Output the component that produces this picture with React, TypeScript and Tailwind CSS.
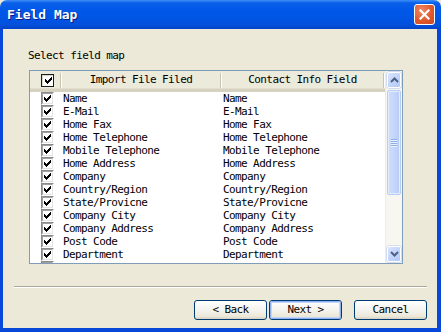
import React from "react";

const FONT = "[font-family:'DejaVu_Sans_Mono',monospace]";

const CHECK_PIXELS: [number, number][] = [
  [6, 0],
  [5, 1], [6, 1],
  [0, 2], [4, 2], [5, 2], [6, 2],
  [0, 3], [1, 3], [3, 3], [4, 3], [5, 3],
  [0, 4], [1, 4], [2, 4], [3, 4], [4, 4],
  [1, 5], [2, 5], [3, 5],
  [2, 6],
];

function CheckMark() {
  return (
    <svg width="7" height="7" viewBox="0 0 7 7" shapeRendering="crispEdges">
      {CHECK_PIXELS.map(([x, y], i) => (
        <rect key={i} x={x} y={y} width="1" height="1" fill="#000" />
      ))}
    </svg>
  );
}

function RowCheck() {
  return (
    <div className="w-[13px] h-[13px] border-t border-l border-t-[#8a8a8a] border-l-[#8a8a8a] border-r border-b border-r-white border-b-white flex">
      <div className="flex-1 border-t border-l border-t-[#a0a0a0] border-l-[#a0a0a0] border-r border-b border-r-[#e4e4e4] border-b-[#e4e4e4] bg-white flex items-center justify-center">
        <CheckMark />
      </div>
    </div>
  );
}

function HeaderCheck() {
  return (
    <div className="w-[13px] h-[13px] border border-[#1c1c1c] bg-white flex">
      <div className="flex-1 border-t border-l border-[#d8d8d0] flex items-center justify-center">
        <CheckMark />
      </div>
    </div>
  );
}

function Sep() {
  return (
    <div className="w-[2px] h-[15px] flex shrink-0">
      <div className="w-[1px] bg-[#c7c5b2]" />
      <div className="w-[1px] bg-white" />
    </div>
  );
}

function Chevron({ down }: { down?: boolean }) {
  return (
    <svg width="9" height="6" viewBox="0 0 9 6">
      <polyline
        points={down ? "1,1 4.5,4.5 8,1" : "1,5 4.5,1.5 8,5"}
        fill="none"
        stroke="#4d6185"
        strokeWidth="2"
      />
    </svg>
  );
}

function ScrollBtn({ down }: { down?: boolean }) {
  return (
    <div className="h-[16px] rounded-[2px] border border-white bg-[linear-gradient(135deg,#dbe6fd_0%,#c3d5fb_50%,#b4c8f6_100%)] shadow-[0_0_0_0.5px_#b0c4ee] flex items-center justify-center">
      <Chevron down={down} />
    </div>
  );
}

const rows = [
  "Name",
  "E-Mail",
  "Home Fax",
  "Home Telephone",
  "Mobile Telephone",
  "Home Address",
  "Company",
  "Country/Region",
  "State/Provicne",
  "Company City",
  "Company Address",
  "Post Code",
  "Department",
];

function Button({ label, def }: { label: string; def?: boolean }) {
  return (
    <div className="w-[73px] h-[20px] rounded-[3px] border border-[#003c74] bg-[linear-gradient(180deg,#ffffff_0%,#f4f3ee_50%,#ece9d8_85%,#d6d0c5_100%)] flex">
      <div
        className={
          "flex-1 rounded-[2px] flex items-center justify-center text-black text-[11px] tracking-[-0.6px] " +
          FONT +
          (def ? " border border-[#8fb0f0] shadow-[inset_0_0_0_1px_#c4d6f7]" : "")
        }
      >
        {label}
      </div>
    </div>
  );
}

export default function App() {
  return (
    <div className="w-[441px] h-[332px] flex flex-col bg-[#ece9d8]">
      {/* Title bar */}
      <div className="h-[29px] shrink-0 rounded-t-[7px] bg-[linear-gradient(180deg,#3d8ff6_0%,#0a60ea_10%,#0058e8_35%,#0055e5_60%,#0450dc_85%,#0343c8_100%)] flex items-center pl-[7px] pr-[6px]">
        <div
          className={
            "text-white font-bold text-[13px] leading-none tracking-[0px] [text-shadow:1px_1px_0_#0a1a80] " +
            FONT
          }
        >
          Field Map
        </div>
        <div className="flex-1" />
        <div className="w-[21px] h-[21px] rounded-[3px] border border-white bg-[radial-gradient(circle_at_35%_30%,#f08a68_0%,#e2582c_55%,#c84a20_100%)] flex items-center justify-center">
          <svg width="11" height="11" viewBox="0 0 11 11">
            <path d="M1.5 1.5 L9.5 9.5 M9.5 1.5 L1.5 9.5" stroke="#fff" strokeWidth="2.2" strokeLinecap="square" />
          </svg>
        </div>
      </div>

      {/* Body */}
      <div className="flex-1 flex flex-col border-l-[3px] border-r-[4px] border-b-[4px] border-[#0848d8]">
        <div className={"ml-[25px] mt-[20px] h-[13px] leading-[13px] text-[11px] tracking-[-0.6px] text-black " + FONT}>
          Select field map
        </div>

        {/* List box */}
        <div className="ml-[26px] mt-[8px] w-[374px] h-[194px] border border-[#7f9db9] bg-white flex overflow-hidden">
          <div className="w-[355px] flex flex-col overflow-hidden">
            {/* Header */}
            <div className="h-[21px] shrink-0 flex items-center bg-[#ebeadb] border-b-[3px] border-b-[#d6d2c2] shadow-[inset_0_-1px_0_#e2decd]">
              <div className="w-[32px] h-full flex items-center">
                <div className="ml-[11px] flex-1">
                  <HeaderCheck />
                </div>
                <Sep />
              </div>
              <div className={"w-[160px] flex items-center " + FONT}>
                <div className="flex-1 text-center text-[11px] tracking-[-0.6px] text-black">Import File Filed</div>
                <Sep />
              </div>
              <div className={"flex-1 flex items-center " + FONT}>
                <div className="flex-1 text-center text-[11px] tracking-[-0.6px] text-black">Contact Info Field</div>
                <Sep />
              </div>
            </div>
            {/* Rows */}
            {rows.map((r) => (
              <div key={r} className={"h-[13px] shrink-0 flex items-center text-[11px] tracking-[-0.6px] text-black " + FONT}>
                <div className="w-[32px] pl-[11px]">
                  <RowCheck />
                </div>
                <div className="w-[160px] pl-[1px] leading-[13px] whitespace-nowrap">{r}</div>
                <div className="flex-1 pl-[1px] leading-[13px] whitespace-nowrap">{r}</div>
              </div>
            ))}
            {/* partially visible next row */}
            <div className="h-[13px] shrink-0 flex items-center">
              <div className="w-[32px] pl-[11px]">
                <RowCheck />
              </div>
            </div>
          </div>

          {/* Scrollbar */}
          <div className="w-[17px] flex flex-col p-[1px] bg-[#f7f6f0] border-l border-[#eeede5]">
            <ScrollBtn />
            <div className="mt-[2px] h-[105px] rounded-[2px] border border-[#b8ccf4] bg-[linear-gradient(90deg,#cfdcfa_0%,#c6d6fb_50%,#b8cbf5_100%)] shadow-[inset_0_0_0_1px_#e4ecfd] flex flex-col items-center justify-center gap-[1px]">
              {[0, 1, 2, 3].map((i) => (
                <div key={i} className="w-[6px] h-[1px] bg-[#8cacec] shadow-[0_1px_0_#eef4fe]" />
              ))}
            </div>
            <div className="flex-1" />
            <ScrollBtn down />
          </div>
        </div>

        {/* Separator */}
        <div className="ml-[11px] mr-[10px] mt-[22px]">
          <div className="h-[1px] bg-[#aca899]" />
          <div className="h-[1px] bg-white" />
        </div>

        {/* Buttons */}
        <div className="mt-[12px] mr-[10px] flex justify-end">
          <Button label="< Back" />
          <div className="w-[2px]" />
          <Button label="Next >" def />
          <div className="w-[12px]" />
          <Button label="Cancel" />
        </div>
      </div>
    </div>
  );
}
